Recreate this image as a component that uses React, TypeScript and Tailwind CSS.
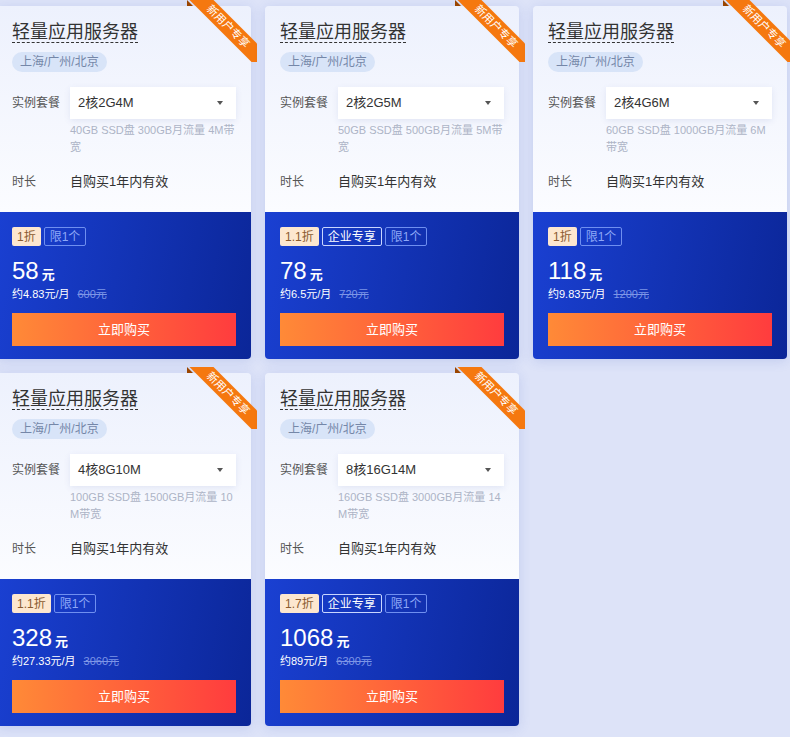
import React from "react";

type Plan = {
  spec: string;
  desc: string;
  tags: string[];
  price: string;
  monthly: string;
  original: string;
};

const PLANS: Plan[] = [
  { spec: "2核2G4M", desc: "40GB SSD盘 300GB月流量 4M带宽", tags: ["1折", "限1个"], price: "58", monthly: "约4.83元/月", original: "600元" },
  { spec: "2核2G5M", desc: "50GB SSD盘 500GB月流量 5M带宽", tags: ["1.1折", "企业专享", "限1个"], price: "78", monthly: "约6.5元/月", original: "720元" },
  { spec: "2核4G6M", desc: "60GB SSD盘 1000GB月流量 6M带宽", tags: ["1折", "限1个"], price: "118", monthly: "约9.83元/月", original: "1200元" },
  { spec: "4核8G10M", desc: "100GB SSD盘 1500GB月流量 10M带宽", tags: ["1.1折", "限1个"], price: "328", monthly: "约27.33元/月", original: "3060元" },
  { spec: "8核16G14M", desc: "160GB SSD盘 3000GB月流量 14M带宽", tags: ["1.7折", "企业专享", "限1个"], price: "1068", monthly: "约89元/月", original: "6300元" },
];

const Tag = ({ label }: { label: string }) => {
  if (label.endsWith("折")) {
    return (
      <span className="h-[19px] px-[5px] flex items-center rounded-[2px] bg-[#fde7cf] text-[#8a5a2e] text-[12px]">
        {label}
      </span>
    );
  }
  if (label === "企业专享") {
    return (
      <span className="h-[19px] px-[5px] flex items-center rounded-[2px] border border-[#c9d6ff] text-white text-[12px]">
        {label}
      </span>
    );
  }
  return (
    <span className="h-[19px] px-[5px] flex items-center rounded-[2px] border border-[#6f8ff0] text-[#8ea8f7] text-[12px]">
      {label}
    </span>
  );
};

const Ribbon = () => (
  <div className="absolute top-[-6px] right-[-6px] w-[70px] h-[62px] overflow-hidden">
    <div className="absolute left-0 top-0 w-[6px] h-[6px] bg-[#9a4500] [clip-path:polygon(0_0,100%_100%,0_100%)]" />
    <div className="absolute right-0 bottom-0 w-[6px] h-[6px] bg-[#9a4500] [clip-path:polygon(0_0,100%_0,100%_100%)]" />
    <div className="absolute left-[-15px] top-[18px] w-[112px] h-[17px] rotate-45 bg-[#f5780f] text-white text-[11px] leading-[17px] text-center">
      新用户专享
    </div>
  </div>
);

const PlanCard = ({ plan }: { plan: Plan }) => (
  <div className="relative w-[254px] rounded-[4px] shadow-[0_2px_12px_rgba(70,100,200,0.18)]">
    <Ribbon />
    <div className="rounded-t-[4px] bg-[linear-gradient(180deg,#edf1fd,#fbfcff)] px-[15px] pt-[16px] pb-[20px]">
      <div className="w-fit h-[21px] text-[18px] leading-[20px] text-[#333] border-b border-dashed border-[#333]">
        轻量应用服务器
      </div>
      <div className="mt-[9px] w-fit flex h-[20px] items-center rounded-full bg-[#d8e4f8] px-[8px] text-[12px] text-[#7587a8]">
        上海/广州/北京
      </div>
      <div className="mt-[15px] flex">
        <span className="w-[58px] h-[32px] shrink-0 flex items-center text-[12px] text-[#555]">实例套餐</span>
        <div className="flex-1">
          <div className="h-[32px] flex items-center justify-between bg-white pl-[8px] pr-[13px] shadow-[0_2px_6px_rgba(90,110,170,0.12)]">
            <span className="text-[13px] text-[#333]">{plan.spec}</span>
            <span className="w-0 h-0 border-l-[3.5px] border-r-[3.5px] border-t-[4px] border-l-transparent border-r-transparent border-t-[#555]" />
          </div>
          <p className="mt-[3px] h-[34px] text-[11px] leading-[17px] text-[#adb4c6] break-all">{plan.desc}</p>
        </div>
      </div>
      <div className="mt-[16px] h-[20px] flex items-center text-[13px]">
        <span className="w-[58px] shrink-0 text-[12px] text-[#555]">时长</span>
        <span className="text-[#333]">自购买1年内有效</span>
      </div>
    </div>
    <div className="rounded-b-[4px] bg-[linear-gradient(100deg,#1a40d2,#0b2698)] px-[15px] pt-[15px] pb-[13px]">
      <div className="flex h-[19px] gap-[3px]">
        {plan.tags.map((t) => (
          <Tag key={t} label={t} />
        ))}
      </div>
      <div className="mt-[10px] h-[30px] flex items-baseline text-white">
        <span className="text-[24px] leading-[30px]">{plan.price}</span>
        <span className="ml-[3px] text-[13px] font-bold">元</span>
      </div>
      <div className="h-[17px] flex items-center gap-[8px] text-[11px]">
        <span className="text-white">{plan.monthly}</span>
        <span className="text-[#7d95e6] line-through">{plan.original}</span>
      </div>
      <button className="mt-[10px] w-full h-[33px] flex items-center justify-center bg-[linear-gradient(90deg,#ff8a37,#ff3c3e)] text-white text-[13px]">
        立即购买
      </button>
    </div>
  </div>
);

export default function App() {
  return (
    <div className="min-h-[737px] bg-[#dde3f8] font-['Liberation_Sans','Noto_Sans_CJK_SC',sans-serif] overflow-hidden">
      <div className="ml-[-3px] pt-[6px] grid grid-cols-[repeat(3,254px)] gap-[14px]">
        {PLANS.map((p) => (
          <PlanCard key={p.spec} plan={p} />
        ))}
      </div>
    </div>
  );
}
